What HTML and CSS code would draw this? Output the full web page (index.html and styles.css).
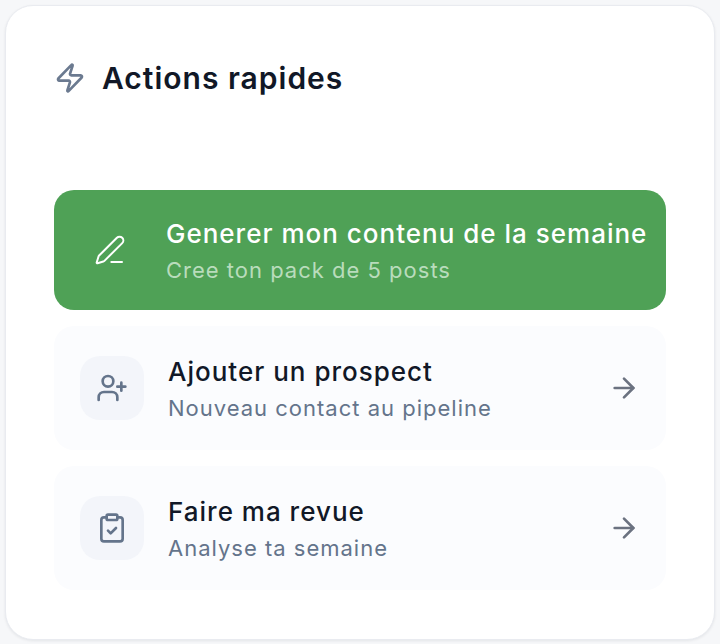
FILE: index.html
```html
<!DOCTYPE html>
<html lang="fr">
<head>
    <meta charset="UTF-8">
    <title>Actions rapides</title>
    <link rel="stylesheet" href="styles.css">
</head>
<body>
    <div class="card">
        <div class="card-header">
            <svg class="bolt" viewBox="0 0 24 24" fill="none" stroke="currentColor" stroke-width="2" stroke-linecap="round" stroke-linejoin="round"><path d="M4 14a1 1 0 0 1-.78-1.63l9.9-10.2a.5.5 0 0 1 .86.46l-1.92 6.02A1 1 0 0 0 13 10h7a1 1 0 0 1 .78 1.63l-9.9 10.2a.5.5 0 0 1-.86-.46l1.92-6.02A1 1 0 0 0 11 14z"/></svg>
            <h2>Actions rapides</h2>
        </div>
        <div class="actions">
            <div class="action primary">
                <div class="action-icon">
                    <svg viewBox="0 0 24 24" fill="none" stroke="currentColor" stroke-width="1.5" stroke-linecap="round" stroke-linejoin="round"><path d="M13 21h8"/><path d="M21.174 6.812a1 1 0 0 0-3.986-3.987L3.842 16.174a2 2 0 0 0-.5.83l-1.321 4.352a.5.5 0 0 0 .623.622l4.353-1.32a2 2 0 0 0 .83-.497z"/></svg>
                </div>
                <div class="action-text">
                    <div class="action-title">Generer mon contenu de la semaine</div>
                    <div class="action-sub">Cree ton pack de 5 posts</div>
                </div>
            </div>
            <div class="action">
                <div class="action-icon">
                    <svg viewBox="0 0 24 24" fill="none" stroke="currentColor" stroke-width="2" stroke-linecap="round" stroke-linejoin="round"><path d="M16 21v-2a4 4 0 0 0-4-4H6a4 4 0 0 0-4 4v2"/><circle cx="9" cy="7" r="4"/><path d="M19 8v6"/><path d="M22 11h-6"/></svg>
                </div>
                <div class="action-text">
                    <div class="action-title">Ajouter un prospect</div>
                    <div class="action-sub">Nouveau contact au pipeline</div>
                </div>
                <svg class="arrow" viewBox="0 0 24 24" fill="none" stroke="currentColor" stroke-width="2" stroke-linecap="round" stroke-linejoin="round"><path d="M5 12h14"/><path d="m12 5 7 7-7 7"/></svg>
            </div>
            <div class="action">
                <div class="action-icon">
                    <svg viewBox="0 0 24 24" fill="none" stroke="currentColor" stroke-width="2" stroke-linecap="round" stroke-linejoin="round"><rect x="8" y="2" width="8" height="4" rx="1"/><path d="M16 4h2a2 2 0 0 1 2 2v14a2 2 0 0 1-2 2H6a2 2 0 0 1-2-2V6a2 2 0 0 1 2-2h2"/><path d="m9 14 2 2 4-4"/></svg>
                </div>
                <div class="action-text">
                    <div class="action-title">Faire ma revue</div>
                    <div class="action-sub">Analyse ta semaine</div>
                </div>
                <svg class="arrow" viewBox="0 0 24 24" fill="none" stroke="currentColor" stroke-width="2" stroke-linecap="round" stroke-linejoin="round"><path d="M5 12h14"/><path d="m12 5 7 7-7 7"/></svg>
            </div>
        </div>
    </div>
</body>
</html>
```

FILE: styles.css
```css
* {
    box-sizing: border-box;
}

body {
    margin: 0;
    padding: 5px 5px 4px 5px;
    height: 644px;
    overflow: hidden;
    background: #f6f7f9;
    font-family: Inter, "Liberation Sans", sans-serif;
}

.card {
    height: 635px;
    background: #ffffff;
    border: 1px solid #e9ebf0;
    border-radius: 28px;
    padding: 0 48px;
    box-shadow: 0 1px 3px rgba(15, 23, 42, 0.08);
}

.card-header {
    display: flex;
    align-items: center;
    gap: 16px;
    height: 146px;
    padding-bottom: 2px;
    margin-bottom: 38px;
    color: #111827;
}

.bolt {
    width: 32px;
    height: 32px;
    color: #6b7a90;
}

.card-header h2 {
    margin: 0;
    font-size: 30px;
    font-weight: 600;
    letter-spacing: 1px;
}

.actions {
    display: flex;
    flex-direction: column;
    gap: 16px;
}

.action {
    display: flex;
    align-items: center;
    height: 124px;
    padding: 0 26px;
    background: #fbfcfe;
    border-radius: 20px;
}

.action-icon {
    flex: none;
    display: flex;
    align-items: center;
    justify-content: center;
    width: 64px;
    height: 64px;
    margin-right: 24px;
    background: #f3f5fa;
    border-radius: 20px;
    color: #64748b;
}

.action-icon svg {
    width: 32px;
    height: 32px;
}

.action-text {
    flex: 1;
    padding-top: 5px;
}

.action-title {
    font-size: 26px;
    font-weight: 450;
    line-height: 36px;
    letter-spacing: 1px;
    color: #111827;
}

.action-sub {
    font-size: 22px;
    line-height: 37px;
    letter-spacing: 1px;
    color: #64748b;
}

.arrow {
    width: 32px;
    height: 32px;
    color: #6b7280;
}

.primary {
    height: 120px;
    background: #4fa156;
    padding: 0 0 0 24px;
}

.primary .action-icon {
    background: transparent;
    color: #ffffff;
}

.primary .action-title {
    color: #ffffff;
    white-space: nowrap;
}

.primary .action-sub {
    color: #b9dcbc;
}
```
